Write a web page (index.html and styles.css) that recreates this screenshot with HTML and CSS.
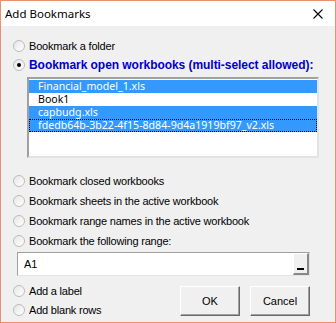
FILE: index.html
```html
<!DOCTYPE html>
<html lang="en">
<head>
  <meta charset="UTF-8">
  <title>Add Bookmarks</title>
  <link rel="stylesheet" href="styles.css">
</head>
<body>
  <div class="dialog">
    <div class="titlebar">
      <span class="title">Add Bookmarks</span>
      <svg class="close" width="10" height="10" viewBox="0 0 10 10">
        <path d="M0.5 0.5 L9.5 9.5 M9.5 0.5 L0.5 9.5" stroke="#000" stroke-width="1.1" fill="none"/>
      </svg>
    </div>

    <div class="content">
      <div class="option first"><span class="radio"></span>Bookmark a folder</div>
      <div class="option strong"><span class="radio checked"></span>Bookmark open workbooks (multi-select allowed):</div>

      <div class="listbox">
        <div class="item selected">Financial_model_1.xls</div>
        <div class="item">Book1</div>
        <div class="item selected">capbudg.xls</div>
        <div class="item selected focus">fdedb64b-3b22-4f15-8d84-9d4a1919bf97_v2.xls</div>
      </div>

      <div class="option gap"><span class="radio"></span>Bookmark closed workbooks</div>
      <div class="option tall"><span class="radio"></span>Bookmark sheets in the active workbook</div>
      <div class="option tall"><span class="radio"></span>Bookmark range names in the active workbook</div>
      <div class="option tall"><span class="radio"></span>Bookmark the following range:</div>

      <div class="rangebox">
        <span class="range-value">A1</span>
        <span class="pick"><span class="bar"></span></span>
      </div>

      <div class="bottom">
        <div class="extras">
          <div class="option"><span class="radio"></span>Add a label</div>
          <div class="option"><span class="radio"></span>Add blank rows</div>
        </div>
        <div class="buttons">
          <button class="btn">OK</button>
          <button class="btn">Cancel</button>
        </div>
      </div>
    </div>
  </div>
</body>
</html>
```

FILE: styles.css
```css
body {
  margin: 0;
  font-family: 'Liberation Sans', Arial, sans-serif;
  font-size: 11px;
  color: #000;
}
.dialog {
  width: 336px;
  height: 323px;
  box-sizing: border-box;
  border: 1px solid #e8916a;
  background-color: #f0f0f0;
}
.titlebar {
  height: 25px;
  background-color: #fff;
  display: flex;
  align-items: center;
  justify-content: space-between;
  padding: 0 12px 0 4px;
}
.title {
  font-family: 'Noto Sans', sans-serif;
  font-size: 11.5px;
}
.close {
  display: block;
}
.content {
  padding: 10px 0 0 12px;
}
.option {
  height: 19px;
  display: flex;
  align-items: center;
  white-space: nowrap;
  letter-spacing: -0.2px;
}
.option.gap {
  margin-top: 13px;
  height: 20px;
}
.option.tall {
  height: 20px;
}
.option.strong {
  font-size: 12px;
  font-weight: bold;
  letter-spacing: -0.05px;
  color: #0000cc;
}
.radio {
  width: 10px;
  height: 10px;
  border: 1px solid #bcbcbc;
  border-radius: 50%;
  background: linear-gradient(135deg, #e6e6e6, #ffffff);
  margin-right: 4px;
  position: relative;
  flex: none;
}
.radio.checked::after {
  content: '';
  position: absolute;
  left: 3px;
  top: 3px;
  width: 4px;
  height: 4px;
  border-radius: 50%;
  background-color: #000;
}
.listbox {
  margin: 3px 0 0 14px;
  width: 292px;
  height: 81px;
  box-sizing: border-box;
  background-color: #fff;
  border-style: solid;
  border-width: 2px;
  border-color: #a0a0a0 #e3e3e3 #e3e3e3 #a0a0a0;
  padding: 1px 0 0 0;
  font-family: 'Noto Sans', sans-serif;
  font-size: 10.6px;
}
.item {
  height: 13px;
  line-height: 13px;
  padding-left: 9px;
  white-space: nowrap;
  overflow: hidden;
}
.item.selected {
  background-color: #3399ff;
  color: #fff;
}
.item.focus {
  outline: 1px dotted #000;
  outline-offset: -1px;
}
.rangebox {
  margin: 1px 0 0 4px;
  width: 293px;
  height: 24px;
  box-sizing: border-box;
  background-color: #fff;
  border-style: solid;
  border-width: 1px;
  border-color: #a0a0a0 #e3e3e3 #e3e3e3 #a0a0a0;
  display: flex;
  align-items: center;
  justify-content: space-between;
  padding: 0 0 0 6px;
}
.pick {
  width: 16px;
  height: 22px;
  box-sizing: border-box;
  border-style: solid;
  border-width: 1px 2px 2px 1px;
  border-color: #fff #888 #888 #fff;
  background-color: #f0f0f0;
  display: flex;
  align-items: flex-end;
  justify-content: center;
  padding-bottom: 3px;
}
.bar {
  width: 7px;
  height: 2px;
  background-color: #000;
}
.bottom {
  display: flex;
  justify-content: space-between;
  margin-top: 5px;
  padding-right: 25px;
}
.buttons {
  display: flex;
  gap: 10px;
  margin-top: 5px;
}
.btn {
  width: 60px;
  height: 30px;
  font-family: 'Liberation Sans', Arial, sans-serif;
  font-size: 11px;
  background-color: #f0f0f0;
  border-style: solid;
  border-width: 1px;
  border-color: #fff #696969 #696969 #fff;
  box-shadow: inset -1px -1px 0 #a0a0a0;
  padding: 0;
}
```
